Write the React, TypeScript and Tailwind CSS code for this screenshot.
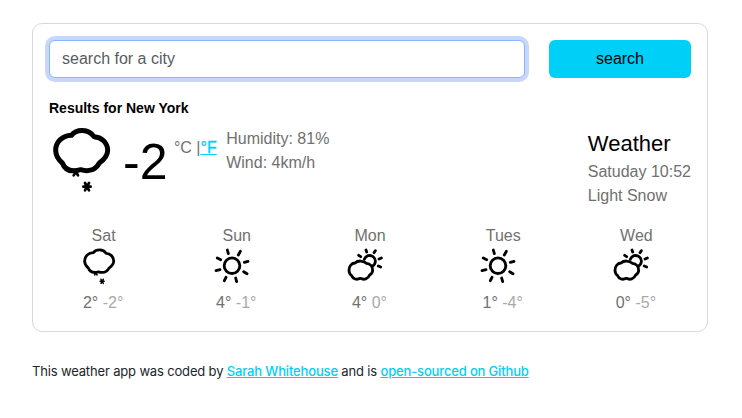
import React from "react";

const snowCloud =
  "M94 46C110 26 146 26 162 50C184 51 203 68 203 91C203 108 192 119 178 129C166 151 144 156 122 149C98 156 76 153 67 129C54 118 47 106 47 91C47 65 68 47 94 46Z";

function SnowShape() {
  return (
    <g fill="none" stroke="#000" strokeLinecap="round" strokeLinejoin="round">
      <path d={snowCloud} strokeWidth="15" />
      <path d="M107 156L101 166M107 156L114 166" strokeWidth="8" />
      <path d="M130 200H152M135 189L147 211M147 189L135 211" strokeWidth="8" />
    </g>
  );
}

function SunShape() {
  return (
    <svg viewBox="51 78 120 120" className="size-10" fill="none" stroke="#000" strokeWidth="8.5" strokeLinecap="round">
      <circle cx="111" cy="137" r="23.5" />
      <path d="M97 90L100 101M136 94L130 105M159 124L148 127M156 161L146 155M125 185L122 174M88 182L93 172M63 152L75 149M67 114L77 119" />
    </svg>
  );
}

function CloudSunShape() {
  return (
    <svg viewBox="45 78 120 120" className="size-10" fill="none" stroke="#000" strokeWidth="8.5" strokeLinecap="round" strokeLinejoin="round">
      <path d="M103 118A17 17 0 1 1 128 138" />
      <path d="M75 129C83 121 100 121 109 130C121 131 128 141 128 151C128 158 124 162 119 165C114 177 102 181 91 175C80 181 69 177 65 167C59 163 57 157 57 151C57 139 64 130 75 129Z" />
      <path d="M86 106L92 110M108 90L110 96M136 92L132 98M154 114L147 117M152 141L145 138" />
    </svg>
  );
}

function SmallSnow() {
  return (
    <svg viewBox="57 78 120 120" className="size-10">
      <g transform="translate(47.5 72) scale(0.56)">
        <SnowShape />
      </g>
    </svg>
  );
}

const days = [
  { name: "Sat", hi: "2°", lo: "-2°", icon: <SmallSnow /> },
  { name: "Sun", hi: "4°", lo: "-1°", icon: <SunShape /> },
  { name: "Mon", hi: "4°", lo: "0°", icon: <CloudSunShape /> },
  { name: "Tues", hi: "1°", lo: "-4°", icon: <SunShape /> },
  { name: "Wed", hi: "0°", lo: "-5°", icon: <CloudSunShape /> },
];

export default function App() {
  return (
    <div className="h-[418px] w-[742px] overflow-hidden bg-white px-8 pt-[23px] font-['Liberation_Sans',Arial,sans-serif]">
      <main className="h-[309px] w-[676px] rounded-[10px] border border-[#d9d9d9] p-4 text-base leading-6 text-[#707070]">
        <form className="flex gap-6" onSubmit={(e) => e.preventDefault()}>
          <input
            type="search"
            placeholder="search for a city"
            className="h-[38px] w-[476px] rounded-md border border-[#86b7fe] bg-white px-3 text-base text-[#212529] shadow-[0_0_0_4px_#c8d6fe] outline-none placeholder:text-[#595c5f]"
          />
          <button className="h-[38px] w-[142px] rounded-md bg-[#00cff8] text-base text-black">search</button>
        </form>
        <h1 className="mt-5 text-sm leading-5 font-bold text-black">Results for New York</h1>
        <section className="flex h-[88px] justify-between pt-[7px]">
          <div className="flex">
            <svg viewBox="36 15 180 210" className="ml-[3px] h-[70px] w-[60px]">
              <SnowShape />
            </svg>
            <div className="ml-[11px] pt-1 text-[50px] leading-[66px] text-black">-2</div>
            <div className="ml-[6.5px] pt-[11px] whitespace-pre">
              °C |<a className="text-[#00cff8] underline [-webkit-text-stroke:0.3px]" href="#f">°F</a>
            </div>
            <div className="ml-[9.5px] pt-[2px]">
              <p>Humidity: 81%</p>
              <p>Wind: 4km/h</p>
            </div>
          </div>
          <div>
            <h2 className="pt-1 text-[22px] leading-[29px] text-black">Weather</h2>
            <p className="pt-[2px]">Satuday 10:52</p>
            <p>Light Snow</p>
          </div>
        </section>
        <section className="-mx-3 mt-[19px] grid grid-cols-5">
          {days.map((d) => (
            <div key={d.name} className="flex flex-col items-center">
              <div className="leading-[22px]">{d.name}</div>
              <div className="-mt-px mr-[10px]">{d.icon}</div>
              <div className="mt-[5px] mr-px">
                {d.hi} <span className="text-[#a9a9a9]">{d.lo}</span>
              </div>
            </div>
          ))}
        </section>
      </main>
      <footer className="mt-[29px] font-[Inter,sans-serif] text-[13px] leading-5 tracking-[-0.16px] whitespace-nowrap text-[#212529]">
        This weather app was coded by{" "}
        <a className="font-medium text-[#00cff8] underline" href="#author">Sarah Whitehouse</a> and is{" "}
        <a className="font-medium text-[#00cff8] underline" href="#source">open-sourced on Github</a>
      </footer>
    </div>
  );
}
